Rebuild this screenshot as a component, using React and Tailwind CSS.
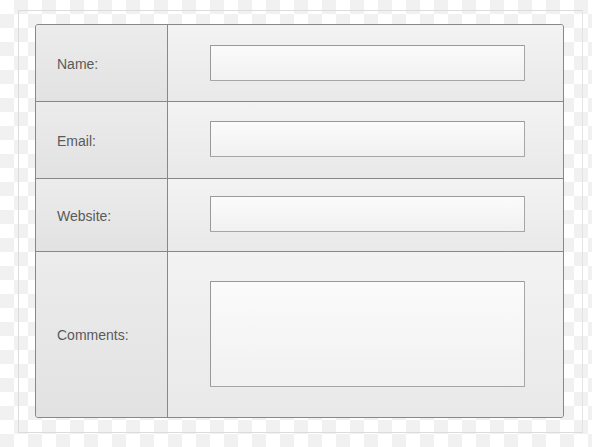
import React from 'react';

const ROWS = [
  { label: 'Name:', h: 'h-[76px]', pad: 'pt-[20px]', field: 'h-[36px]' },
  { label: 'Email:', h: 'h-[77px]', pad: 'pt-[19px]', field: 'h-[36px]' },
  { label: 'Website:', h: 'h-[73px]', pad: 'pt-[17px]', field: 'h-[36px]' },
  { label: 'Comments:', h: 'h-[166px]', pad: 'pt-[29px]', field: 'h-[106px]', area: true },
];

export default function App() {
  return (
    <div className="w-[592px] h-[447px] overflow-hidden bg-[conic-gradient(#f1f1f1_25%,#ffffff_0_50%,#f1f1f1_0_75%,#ffffff_0)] bg-[length:28px_28px] pt-[10px] pl-[18px] font-['Liberation_Sans',Arial,sans-serif]">
      {/* frame */}
      <div className="w-[565px] h-[423px] border border-[#dcdcdc] border-r-[#e4e4e4] pt-[13px] pl-[16px]">
        {/* form table */}
        <div className="w-[529px] border border-[#888888] rounded-[3px] overflow-hidden bg-[#ececec]">
          {ROWS.map((row, i) => (
            <div
              key={row.label}
              className={`flex ${row.h} ${i > 0 ? 'border-t border-[#888888]' : ''}`}
            >
              <div className="w-[132px] shrink-0 border-r border-[#888888] bg-gradient-to-b from-[#ececec] to-[#e2e2e2] flex items-center pl-[21px] pt-[2px] text-[14px] text-[#5a5a5a]">
                {row.label}
              </div>
              <div className={`flex-1 ${row.pad} pl-[42px] bg-gradient-to-b from-[#f3f3f3] to-[#e9e9e9]`}>
                {row.area ? (
                  <textarea
                    className={`block w-[315px] ${row.field} resize-none border border-[#a6a6a6] border-t-[#999999] border-l-[#999999] rounded-[1px] bg-gradient-to-b from-[#fbfbfb] to-[#f1f1f1] outline-none`}
                  />
                ) : (
                  <input
                    type="text"
                    className={`block w-[315px] ${row.field} border border-[#a6a6a6] border-t-[#999999] border-l-[#999999] rounded-[1px] bg-gradient-to-b from-[#fbfbfb] to-[#f1f1f1] outline-none`}
                  />
                )}
              </div>
            </div>
          ))}
        </div>
      </div>
    </div>
  );
}
